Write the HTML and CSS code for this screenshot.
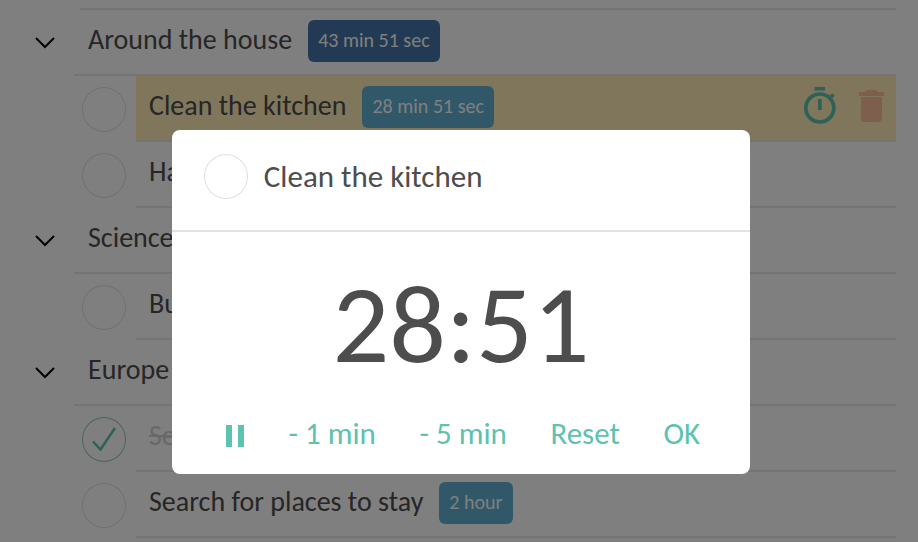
FILE: index.html
```html
<!DOCTYPE html>
<html lang="en">
<head>
<meta charset="utf-8">
<meta name="viewport" content="width=device-width, initial-scale=1">
<title>Tasks</title>
<link rel="stylesheet" href="styles.css">
</head>
<body>
<main class="tasks">
  <section class="group">
    <div class="group-row">
      <button class="toggle" type="button" aria-label="Collapse"><svg viewBox="0 0 20 12" width="20" height="12"><path d="M1 1 L10 10 L19 1"/></svg></button>
      <h2 class="group-title"><span class="name">Around the house</span><span class="badge badge-total">43 min 51 sec</span></h2>
    </div>
    <ul class="items">
      <li class="item">
        <input class="check" type="checkbox" id="t1"><div class="item-body active"><label class="name" for="t1">Clean the kitchen</label><span class="badge">28 min 51 sec</span>
          <div class="actions">
            <button class="icon" type="button" aria-label="Timer"><svg class="timer" viewBox="0 0 32 38" width="32" height="38"><path class="fill" d="M10.500 0h10.500v3.500H10.500zM14 12h3.700v11h-3.700z"/><circle cx="15.800" cy="21" r="14"/><path d="M25.500 11.500l4-4"/></svg></button>
            <button class="icon" type="button" aria-label="Delete"><svg class="trash" viewBox="0 0 25 32" width="25" height="32"><path d="M0 2h6l2-2h9l2 2h6v4H0zM2 7h21v21q0 4-4 4H6q-4 0-4-4z"/></svg></button>
          </div>
        </div>
      </li>
      <li class="item">
        <input class="check" type="checkbox" id="t2"><div class="item-body"><label class="name" for="t2">Ha</label></div>
      </li>
    </ul>
  </section>
  <section class="group">
    <div class="group-row">
      <button class="toggle" type="button" aria-label="Collapse"><svg viewBox="0 0 20 12" width="20" height="12"><path d="M1 1 L10 10 L19 1"/></svg></button>
      <h2 class="group-title"><span class="name">Science</span></h2>
    </div>
    <ul class="items">
      <li class="item">
        <input class="check" type="checkbox" id="t3"><div class="item-body"><label class="name" for="t3">Bu</label></div>
      </li>
    </ul>
  </section>
  <section class="group">
    <div class="group-row">
      <button class="toggle" type="button" aria-label="Collapse"><svg viewBox="0 0 20 12" width="20" height="12"><path d="M1 1 L10 10 L19 1"/></svg></button>
      <h2 class="group-title"><span class="name">Europe</span></h2>
    </div>
    <ul class="items">
      <li class="item">
        <span class="check-wrap"><input class="check" type="checkbox" id="t4" checked><svg class="tick" viewBox="0 0 24 24" width="24" height="24"><path d="M1 14.500L8.500 22.500L23 1"/></svg></span><div class="item-body done"><label class="name" for="t4">Se</label></div>
      </li>
      <li class="item">
        <input class="check" type="checkbox" id="t5"><div class="item-body"><label class="name" for="t5">Search for places to stay</label><span class="badge">2 hour</span></div>
      </li>
    </ul>
  </section>
</main>
<div class="overlay">
  <div class="dialog" role="dialog" aria-modal="true" aria-labelledby="dt">
    <header class="dialog-head">
      <input class="check" type="checkbox" id="dc"><label class="name" id="dt" for="dc">Clean the kitchen</label>
    </header>
    <div class="clock">28:51</div>
    <div class="controls">
      <button type="button" aria-label="Pause"><svg class="pause" viewBox="0 0 20 22" width="20" height="22"><path d="M1 0h6v22H1zM13 0h6v22h-6z"/></svg></button>
      <button type="button">- 1 min</button>
      <button type="button">- 5 min</button>
      <button type="button">Reset</button>
      <button type="button">OK</button>
    </div>
  </div>
</div>
</body>
</html>
```
FILE: styles.css
```css
* { box-sizing: border-box; }
body {
  margin: 0;
  overflow: hidden;
  background: #fff;
  color: #4d4d4d;
  font: 28px/32px Carlito, Calibri, Lato, sans-serif;
}
button {
  border: 0;
  padding: 0;
  background: none;
  color: inherit;
  font: inherit;
}
svg { display: block; }

.tasks { padding: 8px 22px 0 0; }
.tasks::before {
  content: "";
  display: block;
  height: 2px;
  margin-left: 80px;
  background: #e8e8ea;
}
.group-row { display: flex; }
.toggle { width: 74px; padding: 0 0 0 35px; }
.toggle path { fill: none; stroke: #000; stroke-width: 2; }
.group-title {
  display: flex;
  flex: 1;
  align-items: center;
  gap: 16px;
  height: 66px;
  margin: 0;
  padding: 0 14px 2px;
  border-bottom: 2px solid #e8e8ea;
  font: inherit;
}
.name { padding-bottom: 2px; }
.badge {
  padding: 0 10px 2px;
  border-radius: 6px;
  background: #60b0d0;
  color: #fff;
  font-size: 20px;
  line-height: 40px;
}
.badge-total { background: #4474a8; }

.items { margin: 0; padding: 0; list-style: none; }
.item { display: flex; align-items: center; padding-left: 82px; }
.check {
  appearance: none;
  flex: none;
  width: 44px;
  height: 45px;
  margin: 0;
  border: 1px solid #e0e0e0;
  border-radius: 50%;
  background: #fff;
}
.check:checked { border-color: #8cccc0; }
.check-wrap { display: grid; place-items: center; }
.check-wrap > * { grid-area: 1 / 1; }
.tick { position: relative; }
.tick path { fill: none; stroke: #5dc2af; stroke-width: 2.5; }
.item-body {
  display: flex;
  flex: 1;
  align-items: center;
  gap: 16px;
  height: 66px;
  margin-left: 10px;
  padding: 0 12px 2px 13px;
  border-bottom: 2px solid #e8e8ea;
}
.active { background: #feecb6; background-clip: padding-box; }
.done .name { color: #d0d0d0; text-decoration: line-through; }
.actions {
  display: flex;
  align-items: center;
  gap: 23px;
  margin-left: auto;
  padding-bottom: 2px;
}
.timer circle, .timer path { fill: none; stroke: #5dc2af; stroke-width: 3.7; }
.timer .fill { fill: #5dc2af; stroke: none; }
.trash path { fill: #fcbc98; }

.overlay {
  position: fixed;
  inset: 0;
  display: flex;
  align-items: center;
  justify-content: center;
  padding: 62px 0 0 4px;
  background: rgba(0, 0, 0, .5);
}
.dialog {
  width: 63vw;
  border-radius: 8px;
  background: #fff;
}
.dialog-head {
  display: flex;
  align-items: center;
  gap: 16px;
  padding: 24px 32px 31px;
  border-bottom: 2px solid #e2e2e2;
  font-size: 31px;
}
.clock {
  padding: 32px 0 24px;
  font-size: 112px;
  line-height: 120px;
  text-align: center;
}
.controls {
  display: flex;
  justify-content: space-between;
  align-items: center;
  padding: 9px 50px 25px 53px;
  color: #5dc2af;
  font-size: 31px;
}
.pause { margin-top: 6px; }
.pause path { fill: #5dc2af; }
```
